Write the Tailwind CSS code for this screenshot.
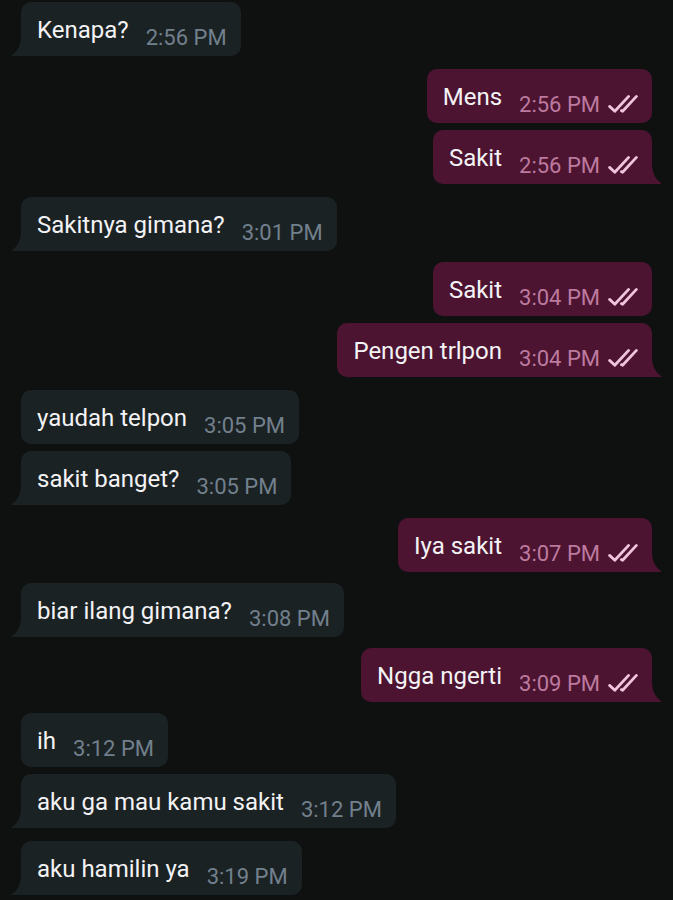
<!DOCTYPE html>
<html lang="id">
<head>
    <meta charset="UTF-8">
    <meta name="viewport" content="width=device-width, initial-scale=1.0">
    <title>Chat</title>
    <script src="https://cdn.jsdelivr.net/npm/@tailwindcss/browser@4"></script>
</head>
<body class="bg-[#0f1110] font-[Roboto,sans-serif] text-[#f3f3f5]">
    <!-- Shared shapes -->
    <svg class="hidden">
        <symbol id="checks" viewBox="0 0 30 20">
            <path d="M1.6 12.4L6.8 17.2L20.6 2.4M13.4 16.6L14.6 17.2L28.4 2.4" fill="none" stroke="currentColor" stroke-width="2.8" stroke-linecap="round" stroke-linejoin="round"/>
        </symbol>
        <symbol id="tail-in" viewBox="0 0 10 18">
            <path d="M10 0Q9 12 1 17Q0 18 1 18H10Z" fill="currentColor"/>
        </symbol>
        <symbol id="tail-out" viewBox="0 0 10 18">
            <path d="M0 0Q1 12 9 17Q10 18 9 18H0Z" fill="currentColor"/>
        </symbol>
    </svg>

    <main id="chat" class="flex flex-col px-[21px] pt-[2px] pb-[5px]"></main>

    <script>
        // side, text, time, has tail, space above
        const messages = [
            ["in", "Kenapa?", "2:56 PM", true, ""],
            ["out", "Mens", "2:56 PM", false, "mt-[13px]"],
            ["out", "Sakit", "2:56 PM", true, "mt-[7px]"],
            ["in", "Sakitnya gimana?", "3:01 PM", true, "mt-[13px]"],
            ["out", "Sakit", "3:04 PM", false, "mt-[11px]"],
            ["out", "Pengen trlpon", "3:04 PM", true, "mt-[7px]"],
            ["in", "yaudah telpon", "3:05 PM", false, "mt-[13px]"],
            ["in", "sakit banget?", "3:05 PM", true, "mt-[7px]"],
            ["out", "Iya sakit", "3:07 PM", true, "mt-[13px]"],
            ["in", "biar ilang gimana?", "3:08 PM", true, "mt-[11px]"],
            ["out", "Ngga ngerti", "3:09 PM", true, "mt-[11px]"],
            ["in", "ih", "3:12 PM", false, "mt-[11px]"],
            ["in", "aku ga mau kamu sakit", "3:12 PM", true, "mt-[7px]"],
            ["in", "aku hamilin ya", "3:19 PM", true, "mt-[13px]"],
        ];

        const styles = {
            in: {
                bubble: "self-start bg-[#1b2224]",
                corner: "rounded-bl-none",
                tail: "right-full text-[#1b2224]",
                time: "text-[#72808d]",
            },
            out: {
                bubble: "self-end bg-[#4c1431]",
                corner: "rounded-br-none",
                tail: "left-full text-[#4c1431]",
                time: "text-[#bd7a9f]",
            },
        };

        document.getElementById("chat").innerHTML = messages.map(([side, text, time, tail, space]) => {
            const s = styles[side];
            return `
                <div class="relative flex items-start gap-[17px] rounded-[10px] pl-4 pr-[14px] h-[54px] ${s.bubble} ${tail ? s.corner : ""} ${space}">
                    <p class="pt-[11px] text-[24px] leading-[34px]">${text}</p>
                    <div class="flex items-start gap-2 pt-[19px] ${s.time}">
                        <time class="text-[22px] leading-[34px]">${time}</time>
                        ${side === "out" ? `<svg class="mt-[6px] w-[30px] h-[20px] text-[#f0c4de]" role="img" aria-label="Read"><use href="#checks"/></svg>` : ""}
                    </div>
                    ${tail ? `<svg class="absolute bottom-0 w-[10px] h-[18px] ${s.tail}" aria-hidden="true"><use href="#tail-${side}"/></svg>` : ""}
                </div>`;
        }).join("");
    </script>
</body>
</html>
